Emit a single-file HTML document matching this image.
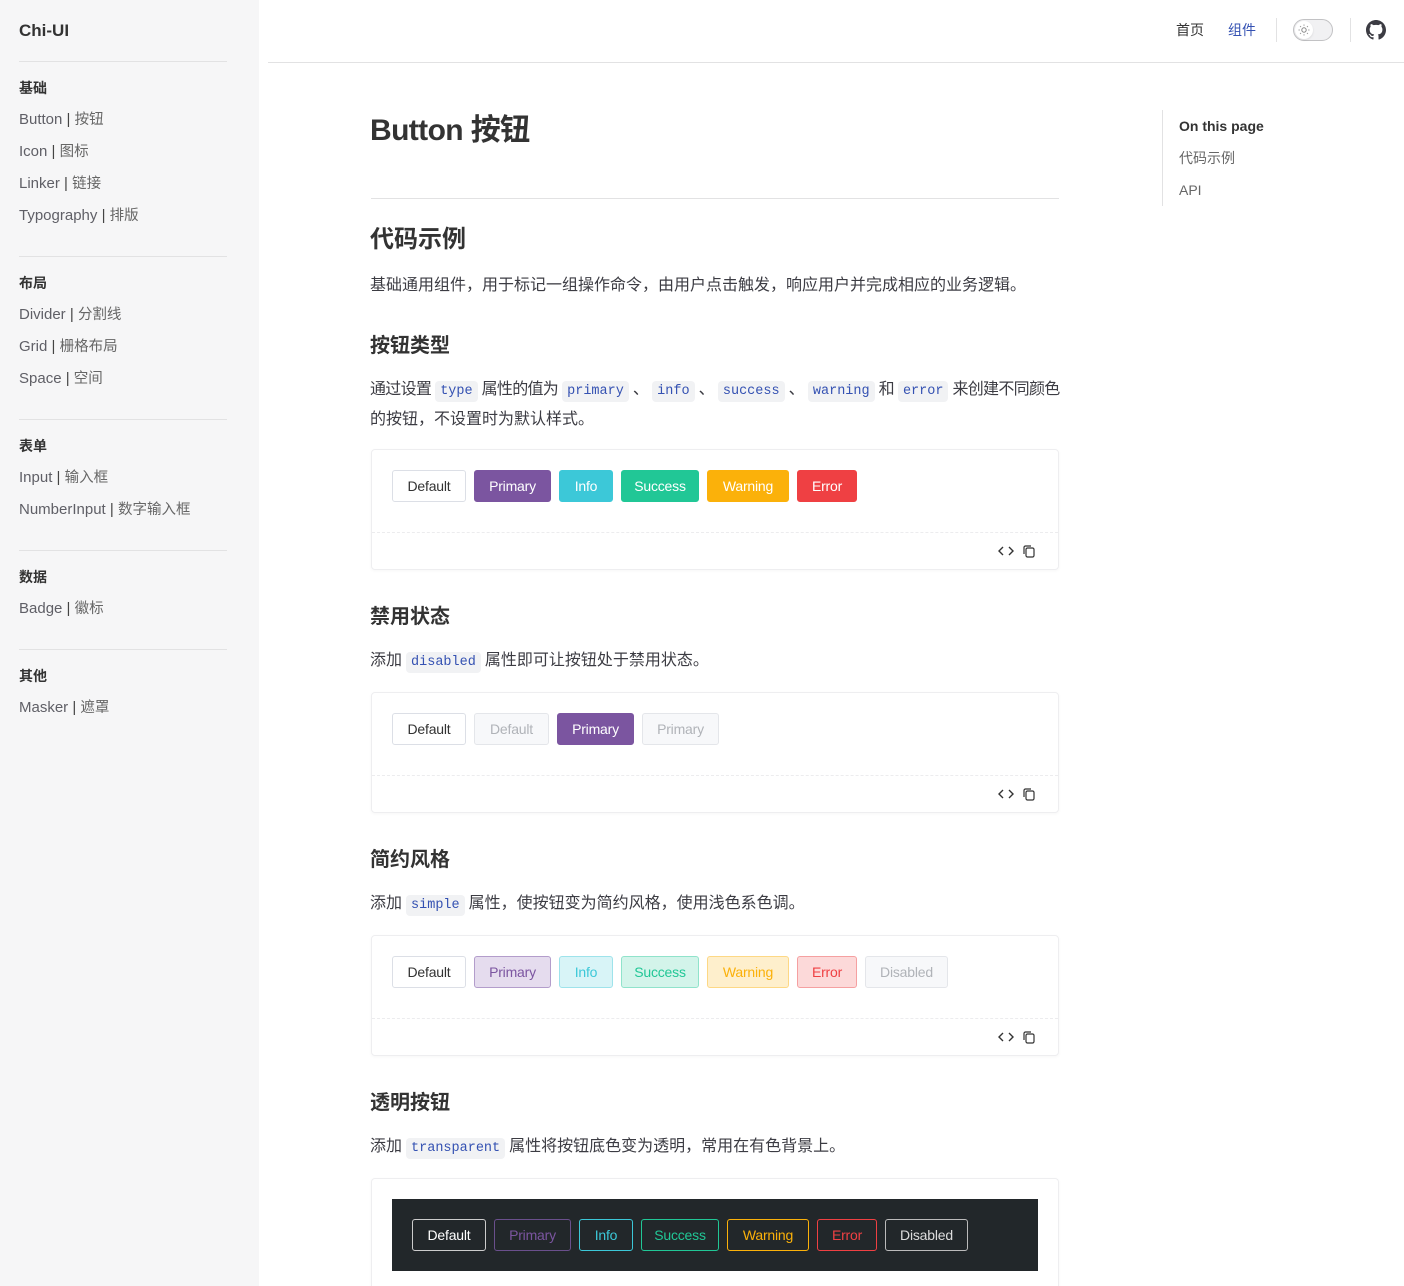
<!DOCTYPE html>
<html style="width:1404px;height:1286px;overflow:hidden"><head><meta charset="utf-8">
<style>
*{box-sizing:border-box;margin:0;padding:0}
body{width:1404px;height:1286px;overflow:hidden;background:#fff;font-family:"Liberation Sans","Noto Sans CJK SC",sans-serif;color:#3c3c43;position:relative}
.a{position:absolute;white-space:nowrap}
.side{position:absolute;left:0;top:0;width:259px;height:1286px;background:#f6f6f7}
.sl{position:absolute;left:19px;width:208px;height:1px;background:#e2e2e3}
.gt{position:absolute;left:19px;font-size:14px;font-weight:bold;color:#333;line-height:20px}
.it{position:absolute;left:19px;font-size:15px;color:#5f5f66;line-height:20px}
.it i{font-style:normal;color:#444}
.it b{font-weight:normal;font-size:14.5px;color:#666}
.h2{font-size:24px;font-weight:bold;color:#333;line-height:32px}
.h3{font-size:20px;font-weight:bold;color:#333;line-height:28px}
.p{font-size:16px;color:#3c3c43;line-height:30px}
code{font-family:"Liberation Mono","DejaVu Sans Mono",monospace;font-size:13.5px;color:#3451b2;background:#f1f2f4;border-radius:4px;padding:3px 5px;margin:0 4px;letter-spacing:0}
.card{position:absolute;left:371px;width:688px;border:1px solid #eeeef0;border-radius:4px;box-shadow:0 1px 3px rgba(0,0,0,.04)}
.dash{position:absolute;left:0;right:0;border-top:1px dashed #ececee}
.btn{position:absolute;height:32px;border-radius:3px;font-size:14px;line-height:30px;text-align:center;border:1px solid #dcdfe6;color:#333;background:#fff;letter-spacing:-0.2px}
</style></head><body>
<div class="side">
<div class="a" style="left:19px;top:20px;font-size:17px;font-weight:bold;color:#333;line-height:22px">Chi-UI</div>
<div class="sl" style="top:61px"></div>
<div class="gt" style="top:78px">基础</div>
<div class="it" style="top:110px">Button <i>|</i> <b>按钮</b></div>
<div class="it" style="top:142px">Icon <i>|</i> <b>图标</b></div>
<div class="it" style="top:174px">Linker <i>|</i> <b>链接</b></div>
<div class="it" style="top:206px">Typography <i>|</i> <b>排版</b></div>
<div class="sl" style="top:256px"></div>
<div class="gt" style="top:273px">布局</div>
<div class="it" style="top:305px">Divider <i>|</i> <b>分割线</b></div>
<div class="it" style="top:337px">Grid <i>|</i> <b>栅格布局</b></div>
<div class="it" style="top:369px">Space <i>|</i> <b>空间</b></div>
<div class="sl" style="top:419px"></div>
<div class="gt" style="top:436px">表单</div>
<div class="it" style="top:468px">Input <i>|</i> <b>输入框</b></div>
<div class="it" style="top:500px">NumberInput <i>|</i> <b>数字输入框</b></div>
<div class="sl" style="top:550px"></div>
<div class="gt" style="top:567px">数据</div>
<div class="it" style="top:599px">Badge <i>|</i> <b>徽标</b></div>
<div class="sl" style="top:649px"></div>
<div class="gt" style="top:666px">其他</div>
<div class="it" style="top:698px">Masker <i>|</i> <b>遮罩</b></div>
</div>

<div class="a" style="left:268px;right:0;top:62px;height:1px;background:#e2e2e3"></div>
<div class="a" style="left:1176px;top:20px;font-size:14px;line-height:20px;color:#333">首页</div>
<div class="a" style="left:1228px;top:20px;font-size:14px;line-height:20px;color:#3451b2">组件</div>
<div class="a" style="left:1276px;top:18px;width:1px;height:24px;background:#e2e2e3"></div>
<div class="a" style="left:1293px;top:19px;width:40px;height:22px;border:1px solid #c2c2c4;border-radius:11px;background:#f1f1f3"></div>
<div class="a" style="left:1295px;top:21px;width:18px;height:18px;border-radius:50%;background:#fff;box-shadow:0 1px 2px rgba(0,0,0,.1)"><svg width="18" height="18" viewBox="0 0 18 18"><circle cx="9" cy="9" r="2.2" fill="none" stroke="#888" stroke-width="1"/><g stroke="#999" stroke-width="1"><path d="M9 3.5v1.3M9 13.2v1.3M3.5 9h1.3M13.2 9h1.3M5.1 5.1l.9.9M12 12l.9.9M5.1 12.9l.9-.9M12 6l.9-.9"/></g></svg></div>
<div class="a" style="left:1350px;top:18px;width:1px;height:24px;background:#e2e2e3"></div>
<svg class="a" style="left:1366px;top:20px" width="20" height="20" viewBox="0 0 16 16"><path fill="#3c3c43" d="M8 0C3.58 0 0 3.58 0 8c0 3.54 2.29 6.53 5.47 7.59.4.07.55-.17.55-.38 0-.19-.01-.82-.01-1.49-2.01.37-2.53-.49-2.69-.94-.09-.23-.48-.94-.82-1.13-.28-.15-.68-.52-.01-.53.63-.01 1.08.58 1.23.82.72 1.21 1.87.87 2.33.66.07-.52.28-.87.51-1.07-1.78-.2-3.64-.89-3.64-3.95 0-.87.31-1.59.82-2.15-.08-.2-.36-1.02.08-2.12 0 0 .67-.21 2.2.82.64-.18 1.32-.27 2-.27.68 0 1.36.09 2 .27 1.53-1.04 2.2-.82 2.2-.82.44 1.1.16 1.92.08 2.12.51.56.82 1.27.82 2.15 0 3.07-1.87 3.75-3.65 3.95.29.25.54.73.54 1.48 0 1.07-.01 1.93-.01 2.2 0 .21.15.46.55.38A8.013 8.013 0 0016 8c0-4.42-3.58-8-8-8z"/></svg>

<div class="a" style="left:1162px;top:110px;width:1px;height:96px;background:#e2e2e3"></div>
<div class="a" style="left:1179px;top:116px;font-size:14px;font-weight:bold;color:#333;line-height:20px">On this page</div>
<div class="a" style="left:1179px;top:148px;font-size:14px;color:#666;line-height:20px">代码示例</div>
<div class="a" style="left:1179px;top:180px;font-size:14px;color:#666;line-height:20px">API</div>

<div class="a" style="left:370px;top:109px;font-size:30px;font-weight:bold;color:#333;line-height:44px;letter-spacing:-0.6px">Button 按钮</div>
<div class="a" style="left:371px;top:198px;width:688px;height:1px;background:#e2e2e3"></div>
<div class="a h2" style="left:370px;top:224px">代码示例</div>
<div class="a p" style="left:370px;top:271px">基础通用组件，用于标记一组操作命令，由用户点击触发，响应用户并完成相应的业务逻辑。</div>

<div class="a h3" style="left:370px;top:332px">按钮类型</div>
<div class="a p" style="left:370px;top:375px;letter-spacing:-0.7px">通过设置<code>type</code>属性的值为<code>primary</code>、<code>info</code>、<code>success</code>、<code>warning</code>和<code>error</code>来创建不同颜色</div>
<div class="a p" style="left:370px;top:405px">的按钮，不设置时为默认样式。</div>

<div class="card" style="top:449px;height:121px">
<div class="dash" style="top:82px"></div>
</div>
<div class="btn" style="left:392px;top:470px;width:74px">Default</div>
<div class="btn" style="left:474px;top:470px;width:77px;background:#7b55a0;border-color:#7b55a0;color:#fff">Primary</div>
<div class="btn" style="left:559px;top:470px;width:54px;background:#3cc8d8;border-color:#3cc8d8;color:#fff">Info</div>
<div class="btn" style="left:621px;top:470px;width:78px;background:#21c796;border-color:#21c796;color:#fff">Success</div>
<div class="btn" style="left:707px;top:470px;width:82px;background:#fbb10a;border-color:#fbb10a;color:#fff">Warning</div>
<div class="btn" style="left:797px;top:470px;width:60px;background:#ef4043;border-color:#ef4043;color:#fff">Error</div>

<div class="a h3" style="left:370px;top:603px">禁用状态</div>
<div class="a p" style="left:370px;top:646px">添加<code>disabled</code>属性即可让按钮处于禁用状态。</div>
<div class="card" style="top:692px;height:121px"><div class="dash" style="top:82px"></div></div>
<div class="btn" style="left:392px;top:713px;width:74px">Default</div>
<div class="btn" style="left:474px;top:713px;width:75px;background:#f7f8fa;color:#b0b3b8;border-color:#e4e6ea">Default</div>
<div class="btn" style="left:557px;top:713px;width:77px;background:#7b55a0;border-color:#7b55a0;color:#fff">Primary</div>
<div class="btn" style="left:642px;top:713px;width:77px;background:#f7f8fa;color:#b0b3b8;border-color:#e4e6ea">Primary</div>

<div class="a h3" style="left:370px;top:846px">简约风格</div>
<div class="a p" style="left:370px;top:889px">添加<code>simple</code>属性，使按钮变为简约风格，使用浅色系色调。</div>
<div class="card" style="top:935px;height:121px"><div class="dash" style="top:82px"></div></div>
<div class="btn" style="left:392px;top:956px;width:74px">Default</div>
<div class="btn" style="left:474px;top:956px;width:77px;background:#e5dcee;border-color:#b39dcb;color:#7b55a0">Primary</div>
<div class="btn" style="left:559px;top:956px;width:54px;background:#d8f4f7;border-color:#9ee3eb;color:#3cc8d8">Info</div>
<div class="btn" style="left:621px;top:956px;width:78px;background:#d3f4ea;border-color:#90e3cb;color:#21c796">Success</div>
<div class="btn" style="left:707px;top:956px;width:82px;background:#feefcc;border-color:#fdd885;color:#fbb10a">Warning</div>
<div class="btn" style="left:797px;top:956px;width:60px;background:#fcd9d9;border-color:#f5a0a1;color:#ef4043">Error</div>
<div class="btn" style="left:865px;top:956px;width:83px;background:#f7f8fa;color:#b0b3b8;border-color:#e4e6ea">Disabled</div>

<div class="a h3" style="left:370px;top:1089px">透明按钮</div>
<div class="a p" style="left:370px;top:1132px">添加<code>transparent</code>属性将按钮底色变为透明，常用在有色背景上。</div>
<div class="card" style="top:1178px;height:108px;border-bottom:none;border-radius:4px 4px 0 0"></div>
<div class="a" style="left:392px;top:1199px;width:646px;height:72px;background:#22272a"></div>
<div class="btn" style="left:412px;top:1219px;width:74px;background:transparent;border-color:#ccc;color:#fff">Default</div>
<div class="btn" style="left:494px;top:1219px;width:77px;background:transparent;border-color:#6a4f8c;color:#7b55a0">Primary</div>
<div class="btn" style="left:579px;top:1219px;width:54px;background:transparent;border-color:#3cc8d8;color:#3cc8d8">Info</div>
<div class="btn" style="left:641px;top:1219px;width:78px;background:transparent;border-color:#21c796;color:#21c796">Success</div>
<div class="btn" style="left:727px;top:1219px;width:82px;background:transparent;border-color:#fbb10a;color:#fbb10a">Warning</div>
<div class="btn" style="left:817px;top:1219px;width:60px;background:transparent;border-color:#ef4043;color:#ef4043">Error</div>
<div class="btn" style="left:885px;top:1219px;width:83px;background:transparent;border-color:#bbb;color:#ddd">Disabled</div>

<svg class="a" style="left:996px;top:543px" width="44" height="16" viewBox="0 0 44 16"><path d="M7 4L3 8l4 4M13 4l4 4-4 4" fill="none" stroke="#333" stroke-width="1.4"/><rect x="30" y="5" width="8" height="9" rx="1.5" fill="none" stroke="#333" stroke-width="1.2"/><path d="M28 11V4.5A1.5 1.5 0 0 1 29.5 3H35" fill="none" stroke="#333" stroke-width="1.2"/></svg>
<svg class="a" style="left:996px;top:786px" width="44" height="16" viewBox="0 0 44 16"><path d="M7 4L3 8l4 4M13 4l4 4-4 4" fill="none" stroke="#333" stroke-width="1.4"/><rect x="30" y="5" width="8" height="9" rx="1.5" fill="none" stroke="#333" stroke-width="1.2"/><path d="M28 11V4.5A1.5 1.5 0 0 1 29.5 3H35" fill="none" stroke="#333" stroke-width="1.2"/></svg>
<svg class="a" style="left:996px;top:1029px" width="44" height="16" viewBox="0 0 44 16"><path d="M7 4L3 8l4 4M13 4l4 4-4 4" fill="none" stroke="#333" stroke-width="1.4"/><rect x="30" y="5" width="8" height="9" rx="1.5" fill="none" stroke="#333" stroke-width="1.2"/><path d="M28 11V4.5A1.5 1.5 0 0 1 29.5 3H35" fill="none" stroke="#333" stroke-width="1.2"/></svg>
</body></html>
